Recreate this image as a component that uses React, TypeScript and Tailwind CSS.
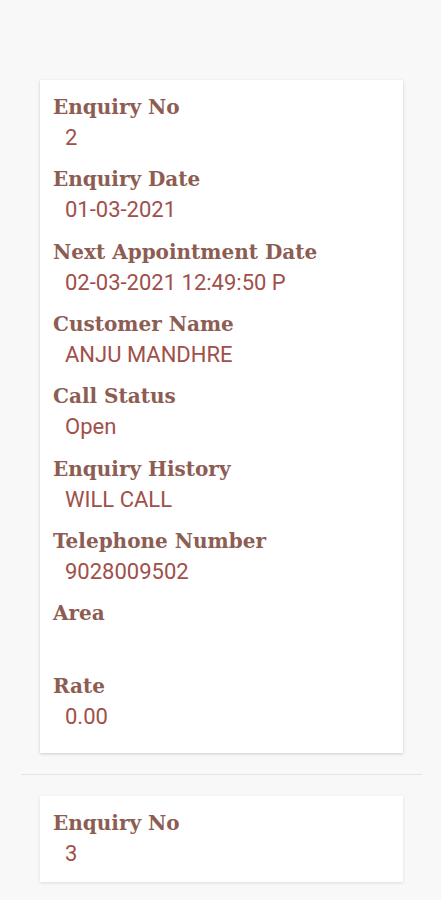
import React from "react";

type Field = { label: string; value: string };

const first: Field[] = [
  { label: "Enquiry No", value: "2" },
  { label: "Enquiry Date", value: "01-03-2021" },
  { label: "Next Appointment Date", value: "02-03-2021 12:49:50 P" },
  { label: "Customer Name", value: "ANJU MANDHRE" },
  { label: "Call Status", value: "Open" },
  { label: "Enquiry History", value: "WILL CALL" },
  { label: "Telephone Number", value: "9028009502" },
  { label: "Area", value: "" },
  { label: "Rate", value: "0.00" },
];

function FieldRow({ f }: { f: Field }) {
  return (
    <div className="flex flex-col mb-[12.33px]">
      <div className="h-[28px] leading-[28px] text-[20px] font-bold text-[#8d5d53] [font-family:'DejaVu_Serif',serif] whitespace-nowrap">
        {f.label}
      </div>
      <div className="h-[32px] pt-[1px] leading-[31px] text-[22px] pl-[12px] text-[#a0504a] [font-family:Roboto,sans-serif] whitespace-nowrap">
        {f.value}
      </div>
    </div>
  );
}

export default function App() {
  return (
    <div className="w-[441px] h-[900px] bg-[#f8f8f8] overflow-hidden flex flex-col">
      <div className="h-[80px]" />
      <div className="ml-[40px] w-[363px] bg-white shadow-[0_1px_3px_rgba(0,0,0,0.18)] pt-[13px] pb-[9px] px-[13px]">
        {first.map((f) => (
          <FieldRow key={f.label} f={f} />
        ))}
      </div>
      <div className="mt-[21px] ml-[21px] w-[401px] h-[1px] bg-[#e4e4e4]" />
      <div className="mt-[21px] ml-[40px] w-[363px] h-[86px] bg-white shadow-[0_1px_3px_rgba(0,0,0,0.12)] pt-[13px] px-[13px]">
        <FieldRow f={{ label: "Enquiry No", value: "3" }} />
      </div>
    </div>
  );
}
